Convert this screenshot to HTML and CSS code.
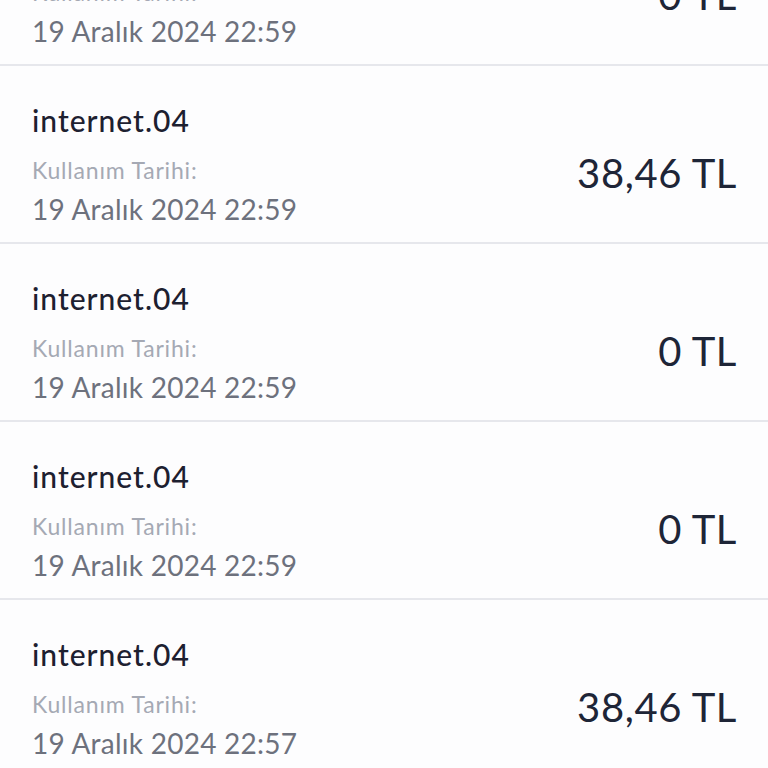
FILE: index.html
```html
<!DOCTYPE html>
<html lang="tr">
<head>
<meta charset="utf-8">
<link rel="stylesheet" href="styles.css">
</head>
<body>
<div class="list">
  <div class="row">
    <div class="info">
      <div class="title">internet.04</div>
      <div class="label">Kullanım Tarihi:</div>
      <div class="date">19 Aralık 2024 22:59</div>
    </div>
    <div class="amount">0 TL</div>
  </div>
  <div class="row">
    <div class="info">
      <div class="title">internet.04</div>
      <div class="label">Kullanım Tarihi:</div>
      <div class="date">19 Aralık 2024 22:59</div>
    </div>
    <div class="amount">38,46 TL</div>
  </div>
  <div class="row">
    <div class="info">
      <div class="title">internet.04</div>
      <div class="label">Kullanım Tarihi:</div>
      <div class="date">19 Aralık 2024 22:59</div>
    </div>
    <div class="amount">0 TL</div>
  </div>
  <div class="row">
    <div class="info">
      <div class="title">internet.04</div>
      <div class="label">Kullanım Tarihi:</div>
      <div class="date">19 Aralık 2024 22:59</div>
    </div>
    <div class="amount">0 TL</div>
  </div>
  <div class="row">
    <div class="info">
      <div class="title">internet.04</div>
      <div class="label">Kullanım Tarihi:</div>
      <div class="date">19 Aralık 2024 22:57</div>
    </div>
    <div class="amount">38,46 TL</div>
  </div>
</div>
</body>
</html>
```
FILE: styles.css
```css
html, body {
  margin: 0;
  padding: 0;
  background: #ffffff;
  overflow: hidden;
}
body {
  font-family: Lato, "Noto Sans", sans-serif;
}
.list {
  margin-top: -112px;
}
.row {
  display: flex;
  justify-content: space-between;
  padding: 36px 32px 17px 32px;
  border-bottom: 2px solid #e6e7ec;
  background: #fdfdfe;
}
.info {
  display: flex;
  flex-direction: column;
}
.title {
  font-size: 30px;
  line-height: 36px;
  font-weight: 500;
  letter-spacing: 1px;
  color: #1d2030;
}
.label {
  margin-top: 17px;
  font-size: 23px;
  line-height: 30px;
  letter-spacing: 0.8px;
  color: #a5a9b4;
}
.date {
  margin-top: 8px;
  font-size: 28px;
  line-height: 32px;
  letter-spacing: 0.25px;
  color: #6d717d;
}
.amount {
  align-self: center;
  padding-top: 18px;
  margin-right: -1px;
  font-size: 40px;
  line-height: 40px;
  letter-spacing: 0.6px;
  color: #1e2537;
}
```
